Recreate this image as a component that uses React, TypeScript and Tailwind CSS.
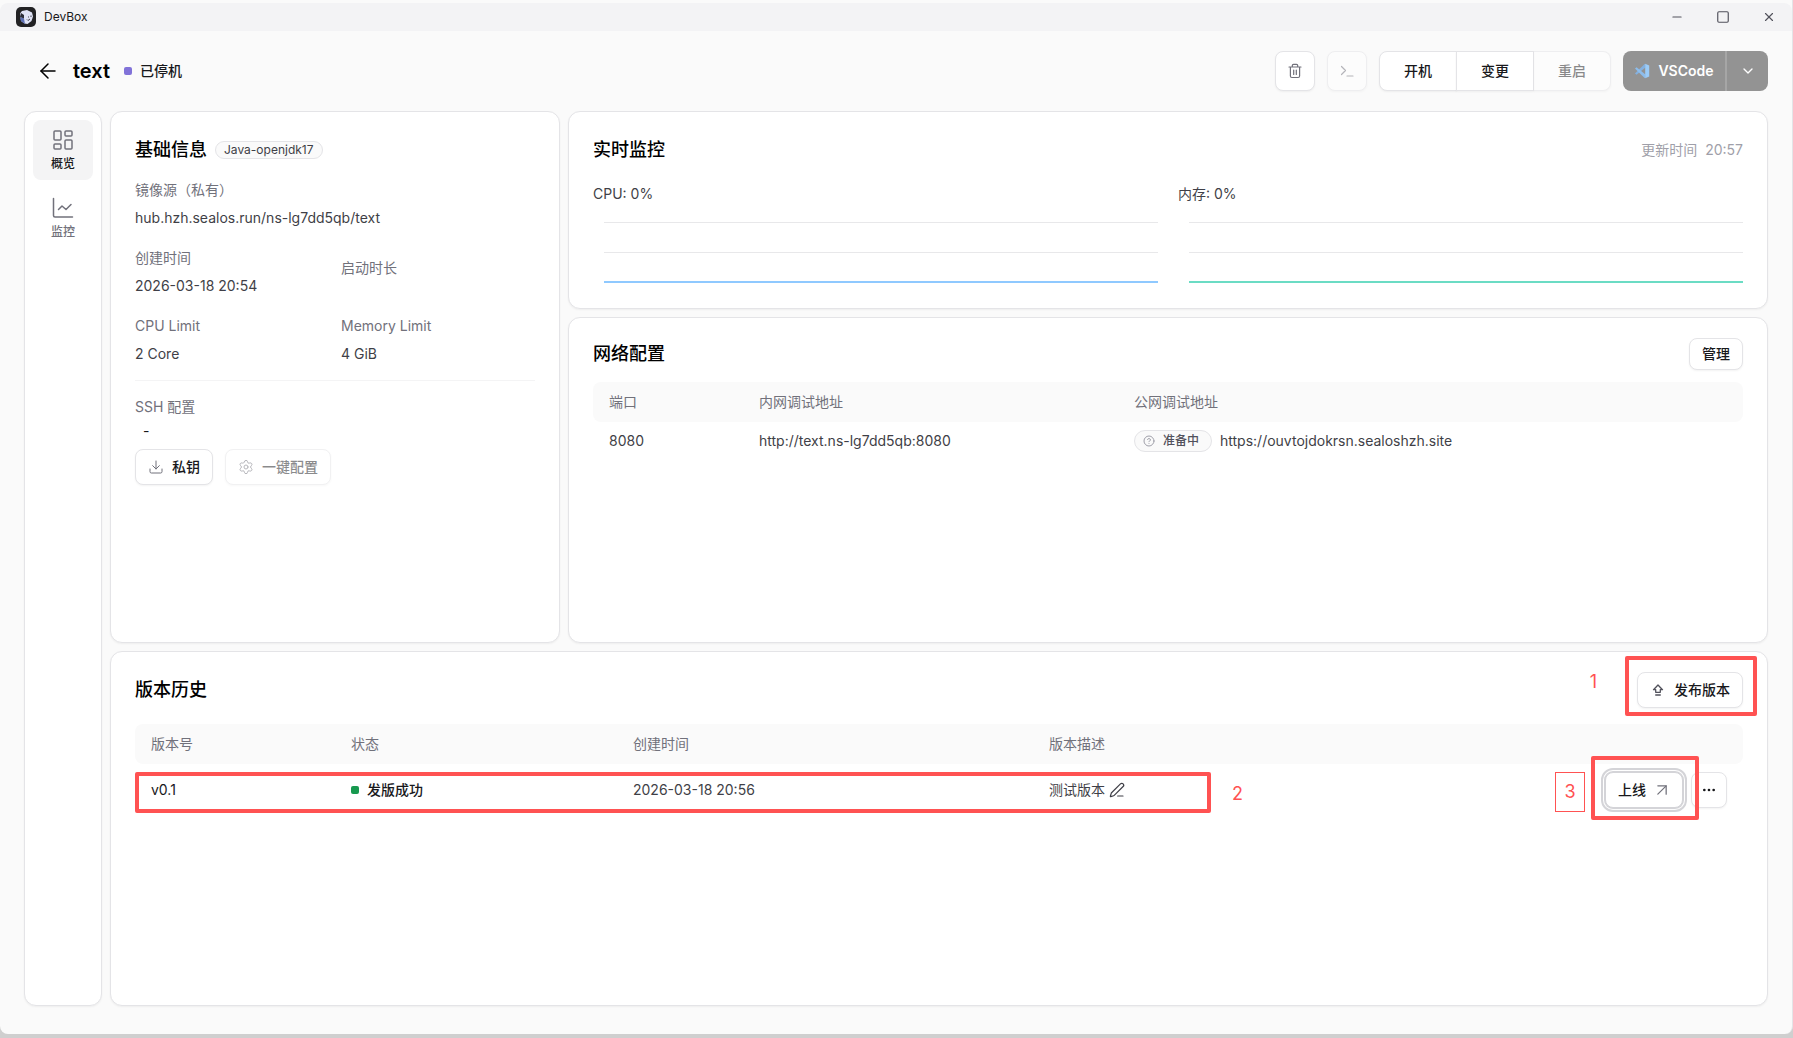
import React from "react";
import {
  ArrowLeft,
  ArrowUpRight,
  ChevronDown,
  CircleHelp,
  Download,
  Ellipsis,
  LayoutDashboard,
  Minus,
  PenLine,
  Settings,
  Square,
  X,
} from "lucide-react";
import { clsx } from "clsx";

interface ButtonProps extends React.ButtonHTMLAttributes<HTMLButtonElement> {
  children: React.ReactNode;
}

const networks = [
  {
    port: "8080",
    inner: "http://text.ns-lg7dd5qb:8080",
    outer: "https://ouvtojdokrsn.sealoshzh.site",
    status: "准备中",
  },
];

const versions = [
  { tag: "v0.1", status: "发版成功", createdAt: "2026-03-18 20:56", description: "测试版本" },
];

function OutlineButton({ className, children, ...rest }: ButtonProps) {
  return (
    <button
      type="button"
      className={clsx(
        "flex items-center justify-center rounded-lg border bg-white text-sm font-medium text-zinc-900 shadow-xs disabled:opacity-50",
        className
      )}
      {...rest}
    >
      {children}
    </button>
  );
}

function Card({ className, children }: { className?: string; children: React.ReactNode }) {
  return (
    <section className={clsx("rounded-xl border border-zinc-200 bg-white px-6 shadow-xs", className)}>
      {children}
    </section>
  );
}

function CardTitle({ children }: { children: React.ReactNode }) {
  return <h2 className="text-lg font-medium text-black">{children}</h2>;
}

function InfoItem({ label, value }: { label: string; value?: string }) {
  return (
    <div className="flex flex-col justify-center gap-2">
      <dt className="text-zinc-500">{label}</dt>
      <dd className="text-zinc-700">{value}</dd>
    </div>
  );
}

function AppLogo() {
  return (
    <svg viewBox="0 0 20 20" className="size-5" aria-hidden="true">
      <rect width="20" height="20" rx="5" fill="#222224" />
      <path d="M4 6.500L6 4l5-1 5 2.500 1 4-1.500 4.500-4 3-3-.5L5 14z" fill="#dfe3f6" />
      <path d="M4 10l4 1.500 1 5.500-4-3z" fill="#5d70b5" />
      <path d="M5 6l3 2v3.500L4 10z" fill="#2b2d38" />
      <path d="M11 12.500l1 1 2-1.500M12.500 9.500v1M15 8.500v1.500" stroke="#33333a" fill="none" strokeWidth="0.9" />
    </svg>
  );
}

function TrashIcon() {
  return (
    <svg viewBox="0 0 16 16" className="size-4 text-zinc-500" fill="none" stroke="currentColor" strokeWidth="1.2" strokeLinecap="round" strokeLinejoin="round" aria-hidden="true">
      <path d="M2 4h12M5.3 4V2.6c0-.7.5-1.2 1.2-1.2h3c.7 0 1.2.5 1.2 1.2V4M3.4 4v9c0 .9.6 1.500 1.500 1.500h6.200c.9 0 1.500-.6 1.500-1.500V4M6.700 7v4.500M9.300 7v4.500" />
    </svg>
  );
}

function PromptIcon() {
  return (
    <svg viewBox="0 0 16 16" className="size-4 text-zinc-500" fill="none" stroke="currentColor" strokeWidth="1.2" strokeLinecap="round" strokeLinejoin="round" aria-hidden="true">
      <path d="M2.500 3.500l4 4-4 4M8 13h6" />
    </svg>
  );
}

function PublishIcon() {
  return (
    <svg viewBox="0 0 16 16" className="size-4 text-zinc-600" fill="none" stroke="currentColor" strokeWidth="1.300" strokeLinecap="round" strokeLinejoin="round" aria-hidden="true">
      <path d="M8 3l4.500 4.700h-2.200v2.600H5.700V7.700H3.500zM5.700 13h4.600" />
    </svg>
  );
}

function MonitorIcon() {
  return (
    <svg viewBox="0 0 24 24" className="size-6" fill="none" stroke="currentColor" strokeWidth="1.500" strokeLinecap="round" strokeLinejoin="round" aria-hidden="true">
      <path d="M2.500 2.500v17A1.500 1.500 0 0 0 4 21H21.500" />
      <path d="M7.500 13.500l3.500-3.500 4 3.500 5-5" />
    </svg>
  );
}

function VSCodeIcon() {
  return (
    <svg viewBox="0 0 16 16" className="size-4" aria-hidden="true">
      <path d="M11.500 4.500L2.500 11.700 1 10.500 10.800.8z" fill="#84b1e0" />
      <path d="M11.500 11.500L2.500 4.300 1 5.500l9.800 9.700z" fill="#8dbdec" />
      <path d="M11.200.7l4 1.900v10.800l-4 1.900z" fill="#9bccf9" />
    </svg>
  );
}

function UsageChart({ label, className }: { label: string; className: string }) {
  return (
    <figure>
      <figcaption className="text-sm text-zinc-700">{label}</figcaption>
      <svg className="mt-3 ml-[11px] block h-20 w-[calc(100%-11px)]" role="img" aria-label={label}>
        <path d="M0 6.500H2000M0 36.500H2000" stroke="#e8e8ea" />
        <path d="M0 66H2000" strokeWidth="2" className={className} />
      </svg>
    </figure>
  );
}

// red rectangle laid over the part it surrounds
function Mark({ className }: { className: string }) {
  return <span aria-hidden="true" className={clsx("pointer-events-none absolute rounded-xs border-4 border-[#ff5252]", className)} />;
}

function TitleBar() {
  return (
    <div className="flex h-7 shrink-0 items-center justify-between rounded-t-lg bg-[#f3f3f5] px-4">
      <div className="flex items-center gap-2 text-xs text-zinc-900">
        <AppLogo />
        DevBox
      </div>
      <div className="flex items-center gap-8 text-zinc-600">
        <button type="button" aria-label="最小化"><Minus className="size-3.5" strokeWidth={2} /></button>
        <button type="button" aria-label="最大化"><Square className="size-3.5" strokeWidth={2} /></button>
        <button type="button" aria-label="关闭"><X className="size-3.5" strokeWidth={2} /></button>
      </div>
    </div>
  );
}

function Header() {
  return (
    <header className="flex h-20 shrink-0 items-center justify-between px-6">
      <div className="flex items-center pl-3">
        <a href="#" aria-label="返回"><ArrowLeft className="size-6" strokeWidth={1.5} /></a>
        <h1 className="ml-[13px] text-xl font-semibold text-black">text</h1>
        <span className="ml-3.5 size-2 rounded-xs bg-[#8172d8]" />
        <span className="ml-2 text-sm font-medium text-zinc-900">已停机</span>
      </div>
      <div className="flex items-center gap-3">
        <OutlineButton className="size-10 border-zinc-200" aria-label="删除"><TrashIcon /></OutlineButton>
        <OutlineButton className="size-10 border-zinc-200" aria-label="终端" disabled><PromptIcon /></OutlineButton>
        <div className="flex">
          <OutlineButton className="h-10 w-[78px] rounded-r-none border-zinc-200">开机</OutlineButton>
          <OutlineButton className="-ml-px h-10 w-[78px] rounded-none border-zinc-200">变更</OutlineButton>
          <OutlineButton className="h-10 w-[77px] rounded-l-none border-l-0 border-zinc-200" disabled>重启</OutlineButton>
        </div>
        <div className="flex h-10 items-center overflow-hidden rounded-lg bg-[#939393] text-sm font-semibold text-white">
          <button type="button" className="flex h-full w-[104px] items-center justify-center gap-2 border-r-2 border-[#a6a6a6]">
            <VSCodeIcon />
            VSCode
          </button>
          <button type="button" aria-label="选择编辑器" className="flex h-full w-[41px] items-center justify-center">
            <ChevronDown className="size-4" />
          </button>
        </div>
      </div>
    </header>
  );
}

function Sidebar() {
  return (
    <nav className="flex w-[78px] shrink-0 flex-col items-center gap-2 rounded-xl border border-zinc-200 bg-white py-2 text-xs font-medium shadow-xs">
      <a href="#" className="flex size-[60px] flex-col items-center justify-center gap-1 rounded-lg bg-zinc-100 text-zinc-900">
        <LayoutDashboard className="size-6 text-zinc-500" strokeWidth={1.5} />
        概览
      </a>
      <a href="#" className="flex size-[60px] flex-col items-center justify-center gap-1 rounded-lg text-zinc-500">
        <MonitorIcon />
        监控
      </a>
    </nav>
  );
}

function BasicInfo() {
  return (
    <Card className="w-[450px] shrink-0 pt-6">
      <div className="flex items-center gap-2">
        <CardTitle>基础信息</CardTitle>
        <span className="rounded-full border border-zinc-200 bg-zinc-50 px-2 text-xs text-zinc-700">Java-openjdk17</span>
      </div>
      <dl className="mt-4 grid grid-cols-2 gap-x-3 gap-y-5 border-b border-zinc-100 pb-4 text-sm">
        <div className="col-span-2">
          <InfoItem label="镜像源（私有）" value="hub.hzh.sealos.run/ns-lg7dd5qb/text" />
        </div>
        <InfoItem label="创建时间" value="2026-03-18 20:54" />
        <InfoItem label="启动时长" />
        <InfoItem label="CPU Limit" value="2 Core" />
        <InfoItem label="Memory Limit" value="4 GiB" />
      </dl>
      <div className="mt-4 text-sm">
        <h3 className="text-zinc-500">SSH 配置</h3>
        <p className="mt-1 pl-2 text-zinc-900">-</p>
        <div className="mt-2 flex gap-3">
          <OutlineButton className="h-9 gap-2 border-zinc-200 px-3">
            <Download className="size-4 text-zinc-500" strokeWidth={1.5} />
            私钥
          </OutlineButton>
          <OutlineButton className="h-9 gap-2 border-zinc-200 px-3" disabled>
            <Settings className="size-4 text-zinc-500" strokeWidth={1.5} />
            一键配置
          </OutlineButton>
        </div>
      </div>
    </Card>
  );
}

function MonitorCard() {
  return (
    <Card className="h-[198px] shrink-0 pt-6">
      <div className="flex items-center justify-between">
        <CardTitle>实时监控</CardTitle>
        <div className="flex gap-2 text-sm text-zinc-400">
          <span>更新时间</span>
          <time>20:57</time>
        </div>
      </div>
      <div className="mt-5 grid grid-cols-2 gap-5">
        <UsageChart label="CPU: 0%" className="stroke-[#8fc9ff]" />
        <UsageChart label="内存: 0%" className="stroke-[#6bdcc4]" />
      </div>
    </Card>
  );
}

function NetworkCard() {
  return (
    <Card className="flex-1 pt-5">
      <div className="flex items-center justify-between">
        <CardTitle>网络配置</CardTitle>
        <OutlineButton className="h-8 border-zinc-200 px-3">管理</OutlineButton>
      </div>
      <table className="mt-3 w-full table-fixed text-left text-sm">
        <thead className="h-10 text-zinc-500">
          <tr>
            <th className="w-[150px] rounded-l-lg bg-zinc-50 px-4 font-normal">端口</th>
            <th className="w-[375px] bg-zinc-50 px-4 font-normal">内网调试地址</th>
            <th className="rounded-r-lg bg-zinc-50 px-4 font-normal">公网调试地址</th>
          </tr>
        </thead>
        <tbody>
          {networks.map((item) => (
            <tr key={item.port} className="h-[38px] text-zinc-700">
              <td className="px-4">{item.port}</td>
              <td className="px-4">{item.inner}</td>
              <td className="px-4">
                <div className="flex items-center gap-2">
                  <span className="flex items-center gap-2 rounded-full border border-zinc-200 bg-zinc-50 py-0.5 pr-3 pl-2 text-xs font-medium text-zinc-600">
                    <CircleHelp className="size-3 text-zinc-400" />
                    {item.status}
                  </span>
                  <a href={item.outer}>{item.outer}</a>
                </div>
              </td>
            </tr>
          ))}
        </tbody>
      </table>
    </Card>
  );
}

function VersionHistory() {
  return (
    <Card className="flex-1 pt-5">
      <div className="flex items-center justify-between">
        <CardTitle>版本历史</CardTitle>
        <div className="relative">
          <OutlineButton className="h-9 gap-2 border-zinc-200 px-3">
            <PublishIcon />
            发布版本
          </OutlineButton>
          <Mark className="-top-4 -right-3.5 -bottom-2 -left-3" />
          <span className="absolute -top-1 right-full mr-10 text-lg text-[#ff5252]">1</span>
        </div>
      </div>
      <div className="relative mt-4">
        <table className="w-full table-fixed text-left text-sm">
          <thead className="h-10 text-zinc-500">
            <tr>
              <th className="w-[200px] rounded-l-lg bg-zinc-50 px-4 font-normal">版本号</th>
              <th className="w-[282px] bg-zinc-50 px-4 font-normal">状态</th>
              <th className="w-[416px] bg-zinc-50 px-4 font-normal">创建时间</th>
              <th className="bg-zinc-50 px-4 font-normal">版本描述</th>
              <th className="w-60 rounded-r-lg bg-zinc-50 px-4" aria-label="操作" />
            </tr>
          </thead>
          <tbody>
            {versions.map((item) => (
              <tr key={item.tag} className="h-13 text-zinc-700">
                <td className="px-4 text-zinc-900">{item.tag}</td>
                <td className="px-4">
                  <div className="flex items-center gap-2 font-medium text-zinc-900">
                    <span className="size-2 rounded-xs bg-[#17994f]" />
                    {item.status}
                  </div>
                </td>
                <td className="px-4">{item.createdAt}</td>
                <td className="px-4">
                  <div className="flex items-center gap-1">
                    {item.description}
                    <button type="button" aria-label="编辑描述"><PenLine className="size-4" strokeWidth={1.8} /></button>
                  </div>
                </td>
                <td className="px-4">
                  <div className="flex justify-end gap-2">
                    <div className="relative">
                      <OutlineButton className="h-9 gap-1.5 border-zinc-300 pr-2.5 pl-3 ring-1 ring-zinc-300 outline-2 outline-offset-2 outline-zinc-300">
                        上线
                        <ArrowUpRight className="size-5 text-zinc-500" strokeWidth={1.5} />
                      </OutlineButton>
                      <Mark className="-top-4 -right-4 -bottom-3 -left-3.5" />
                      <span className="absolute top-0 right-full mr-5 flex h-10 w-[30px] items-center justify-center border border-[#ff5252] text-lg text-[#ff5252]">3</span>
                    </div>
                    <OutlineButton className="size-9 border-zinc-200" aria-label="更多"><Ellipsis className="size-4" /></OutlineButton>
                  </div>
                </td>
              </tr>
            ))}
          </tbody>
        </table>
        <Mark className="top-12 left-0 h-[41px] w-[1076px]" />
        <span className="absolute top-14 left-[1097px] text-lg text-[#ff5252]">2</span>
      </div>
    </Card>
  );
}

export default function App() {
  return (
    <div className="flex min-h-screen flex-col bg-[#cfcfcf] pb-1 font-['Inter','Noto_Sans_CJK_SC',sans-serif]">
      <div className="flex flex-1 flex-col overflow-hidden rounded-b-lg border-r border-zinc-200 bg-[#fafafa] pt-[3px]">
        <TitleBar />
        <Header />
        <main className="flex flex-1 gap-2 px-6 pb-7">
          <Sidebar />
          <div className="flex min-w-0 flex-1 flex-col gap-2">
            <div className="flex h-[532px] gap-2">
              <BasicInfo />
              <div className="flex min-w-0 flex-1 flex-col gap-2">
                <MonitorCard />
                <NetworkCard />
              </div>
            </div>
            <VersionHistory />
          </div>
        </main>
      </div>
    </div>
  );
}
